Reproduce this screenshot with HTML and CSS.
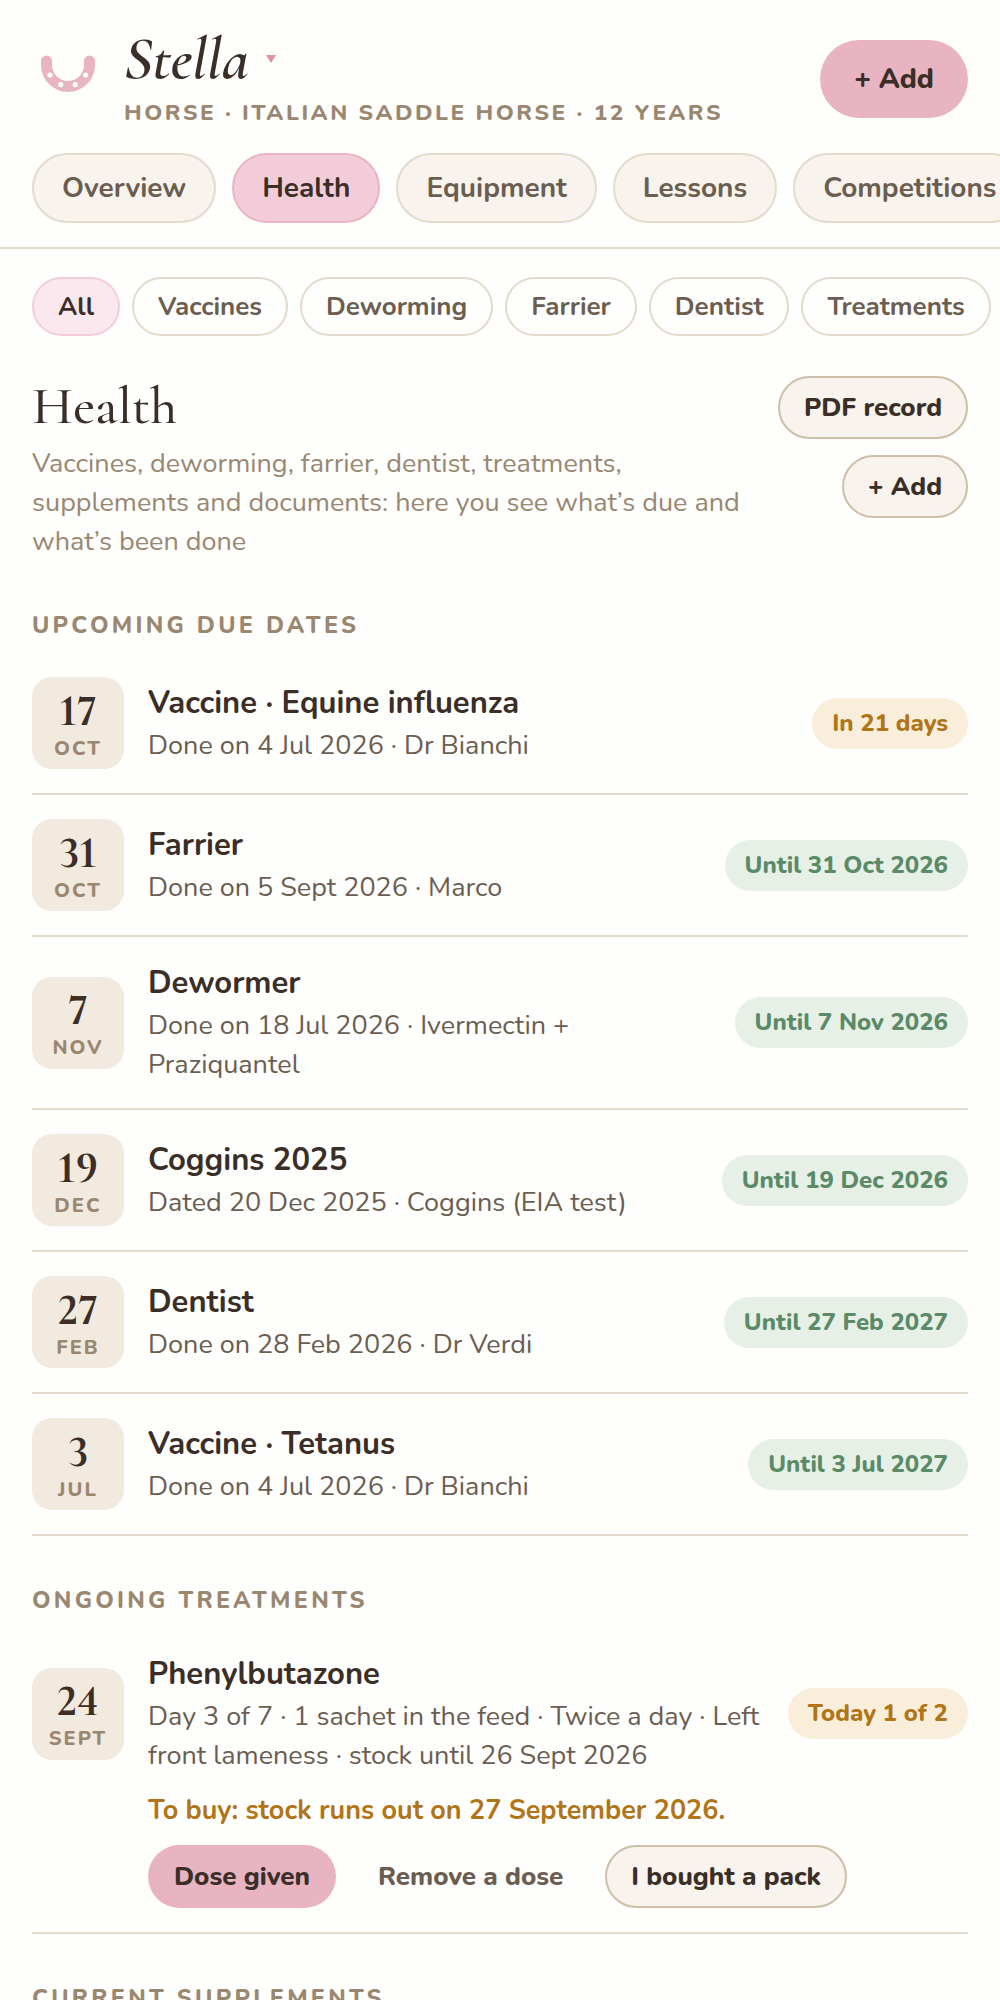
FILE: index.html
```html
<!DOCTYPE html>
<html lang="en">
<head>
  <meta charset="UTF-8">
  <title>Stella · Health</title>
  <meta name="viewport" content="width=device-width, initial-scale=1.0">
  <link rel="stylesheet" href="styles.css">
</head>
<body>
  <header class="top">
    <svg class="logo" viewBox="0 0 56 40" width="56" height="40" aria-hidden="true">
      <path d="M6.5 7V11A21.5 21.5 0 0 0 49.5 11V7" fill="none" stroke="#e8b4c2" stroke-width="11" stroke-linecap="round"/>
      <circle cx="10" cy="21" r="2.6" fill="#fff"/>
      <circle cx="20.7" cy="30.7" r="2.6" fill="#fff"/>
      <circle cx="35.3" cy="30.7" r="2.6" fill="#fff"/>
      <circle cx="45.7" cy="21" r="2.6" fill="#fff"/>
    </svg>
    <div class="who">
      <div class="name">Stella <span class="caret"></span></div>
      <div class="sub">Horse · Italian Saddle Horse · 12 years</div>
    </div>
    <button class="add-main">+ Add</button>
  </header>

  <nav class="tabs">
    <a class="tab">Overview</a>
    <a class="tab active">Health</a>
    <a class="tab">Equipment</a>
    <a class="tab">Lessons</a>
    <a class="tab">Competitions</a>
  </nav>

  <main class="content">
    <div class="chips">
      <a class="chip active">All</a>
      <a class="chip">Vaccines</a>
      <a class="chip">Deworming</a>
      <a class="chip">Farrier</a>
      <a class="chip">Dentist</a>
      <a class="chip">Treatments</a>
    </div>

    <section class="intro">
      <div>
        <h1>Health</h1>
        <p>Vaccines, deworming, farrier, dentist, treatments, supplements and documents: here you see what’s due and what’s been done</p>
      </div>
      <div class="intro-actions">
        <button class="btn">PDF record</button>
        <button class="btn">+ Add</button>
      </div>
    </section>

    <h2>Upcoming due dates</h2>

    <div class="row">
      <div class="row-main">
        <div class="date"><b>17</b><span>Oct</span></div>
        <div class="info">
          <div class="title">Vaccine · Equine influenza</div>
          <div class="desc">Done on 4 Jul 2026 · Dr Bianchi</div>
        </div>
        <span class="badge amber">In 21 days</span>
      </div>
    </div>
    <div class="row">
      <div class="row-main">
        <div class="date"><b>31</b><span>Oct</span></div>
        <div class="info">
          <div class="title">Farrier</div>
          <div class="desc">Done on 5 Sept 2026 · Marco</div>
        </div>
        <span class="badge green">Until 31 Oct 2026</span>
      </div>
    </div>
    <div class="row">
      <div class="row-main">
        <div class="date"><b>7</b><span>Nov</span></div>
        <div class="info">
          <div class="title">Dewormer</div>
          <div class="desc">Done on 18 Jul 2026 · Ivermectin + Praziquantel</div>
        </div>
        <span class="badge green">Until 7 Nov 2026</span>
      </div>
    </div>
    <div class="row">
      <div class="row-main">
        <div class="date"><b>19</b><span>Dec</span></div>
        <div class="info">
          <div class="title">Coggins 2025</div>
          <div class="desc">Dated 20 Dec 2025 · Coggins (EIA test)</div>
        </div>
        <span class="badge green">Until 19 Dec 2026</span>
      </div>
    </div>
    <div class="row">
      <div class="row-main">
        <div class="date"><b>27</b><span>Feb</span></div>
        <div class="info">
          <div class="title">Dentist</div>
          <div class="desc">Done on 28 Feb 2026 · Dr Verdi</div>
        </div>
        <span class="badge green">Until 27 Feb 2027</span>
      </div>
    </div>
    <div class="row">
      <div class="row-main">
        <div class="date"><b>3</b><span>Jul</span></div>
        <div class="info">
          <div class="title">Vaccine · Tetanus</div>
          <div class="desc">Done on 4 Jul 2026 · Dr Bianchi</div>
        </div>
        <span class="badge green">Until 3 Jul 2027</span>
      </div>
    </div>

    <h2>Ongoing treatments</h2>

    <div class="row">
      <div class="row-main">
        <div class="date"><b>24</b><span>Sept</span></div>
        <div class="info">
          <div class="title">Phenylbutazone</div>
          <div class="desc">Day 3 of 7 · 1 sachet in the feed · Twice a day · Left front lameness · stock until 26 Sept 2026</div>
        </div>
        <span class="badge amber">Today 1 of 2</span>
      </div>
      <div class="extra">
        <div class="warn">To buy: stock runs out on 27 September 2026.</div>
        <div class="actions">
          <button class="btn-pink">Dose given</button>
          <button class="btn-plain">Remove a dose</button>
          <button class="btn">I bought a pack</button>
        </div>
      </div>
    </div>

    <h2>Current supplements</h2>
  </main>
</body>
</html>
```

FILE: styles.css
```css
:root {
  --dark: #3a2e26;
  --mid: #6b5d50;
  --light: #9a8770;
  --pink: #e8b4c2;
  --pink-soft: #f2cdd9;
  --pink-pale: #fae8ee;
  --cream: #f8f3ec;
  --line: #e4dacb;
  --sans: "Nunito", "Lato", "Noto Sans", sans-serif;
  --serif: "Cormorant Garamond", "Liberation Serif", serif;
}

* {
  box-sizing: border-box;
}

body {
  margin: 0;
  height: 2000px;
  overflow: hidden;
  background: #fefefd;
  color: var(--dark);
  font-family: var(--sans);
}

button {
  font-family: var(--sans);
  white-space: nowrap;
  cursor: pointer;
}

.top {
  display: flex;
  align-items: flex-start;
  height: 153px;
  padding: 30px 32px 0 40px;
}

.logo {
  margin: 24px 28px 0 0;
  flex: none;
}

.who {
  flex: 1;
}

.name {
  font-family: var(--serif);
  font-style: italic;
  font-weight: 600;
  font-size: 61px;
  line-height: 58px;
}

.caret {
  display: inline-block;
  width: 0;
  height: 0;
  margin-left: 3px;
  vertical-align: 15px;
  border-left: 5px solid transparent;
  border-right: 5px solid transparent;
  border-top: 8px solid #dc93a8;
}

.sub {
  margin-top: 11px;
  font-size: 22.67px;
  line-height: 28px;
  font-weight: 800;
  letter-spacing: 0.11em;
  text-transform: uppercase;
  color: var(--light);
}

.add-main {
  width: 148px;
  height: 78px;
  margin-top: 10px;
  border: 0;
  border-radius: 39px;
  background: var(--pink);
  color: var(--dark);
  font-size: 28px;
  font-weight: 800;
}

.tabs {
  display: flex;
  gap: 16px;
  height: 96px;
  padding: 0 0 0 32px;
  overflow: hidden;
  border-bottom: 2px solid var(--line);
}

.tab {
  flex: none;
  height: 70px;
  padding: 0 28px;
  border: 2px solid var(--line);
  border-radius: 35px;
  background: var(--cream);
  color: var(--mid);
  font-size: 28px;
  font-weight: 700;
  line-height: 66px;
}

.tab.active {
  background: var(--pink-soft);
  border-color: var(--pink);
  color: var(--dark);
}

.content {
  padding: 28px 32px 0;
}

.chips {
  display: flex;
  gap: 12px;
}

.chip {
  height: 59px;
  padding: 0 24px;
  border: 2px solid var(--line);
  border-radius: 30px;
  color: var(--mid);
  font-size: 26px;
  font-weight: 700;
  line-height: 55px;
  white-space: nowrap;
}

.chip.active {
  background: var(--pink-pale);
  border-color: var(--pink-soft);
  color: var(--dark);
}

.intro {
  display: flex;
  justify-content: space-between;
  margin-top: 40px;
}

h1 {
  margin: 0 0 8px;
  font-family: var(--serif);
  font-weight: 500;
  font-size: 54px;
  line-height: 60px;
}

.intro p {
  width: 720px;
  margin: 0;
  font-size: 27px;
  line-height: 39px;
  color: var(--light);
}

.intro-actions {
  display: flex;
  flex-direction: column;
  align-items: flex-end;
  gap: 16px;
}

.btn {
  height: 63px;
  padding: 0 24px;
  border: 2px solid #cfbfa9;
  border-radius: 32px;
  background: var(--cream);
  color: var(--dark);
  font-size: 26px;
  font-weight: 800;
}

h2 {
  margin: 50px 0 14px;
  font-size: 23.33px;
  line-height: 28px;
  font-weight: 800;
  letter-spacing: 0.14em;
  text-transform: uppercase;
  color: var(--light);
}

.row {
  padding: 24px 0;
  border-bottom: 2px solid var(--line);
}

.row-main {
  display: flex;
  align-items: center;
  gap: 24px;
}

.date {
  flex: none;
  display: flex;
  flex-direction: column;
  align-items: center;
  justify-content: center;
  width: 92px;
  height: 92px;
  padding-top: 4px;
  border-radius: 20px;
  background: #f2e9df;
}

.date b {
  font-family: var(--serif);
  font-variant-numeric: lining-nums;
  font-weight: 700;
  font-size: 46px;
  line-height: 41px;
}

.date span {
  margin-top: 6px;
  font-size: 20px;
  line-height: 24px;
  font-weight: 800;
  letter-spacing: 0.1em;
  text-transform: uppercase;
  color: var(--light);
}

.info {
  flex: 1;
  min-width: 0;
}

.title {
  font-size: 31px;
  line-height: 45px;
  font-weight: 700;
}

.desc {
  font-size: 27px;
  line-height: 39px;
  color: var(--mid);
}

.badge {
  flex: none;
  padding: 0 20px;
  height: 51px;
  border-radius: 26px;
  font-size: 24px;
  line-height: 51px;
  font-weight: 800;
}

.amber {
  background: #f9eed9;
  color: #b07518;
}

.green {
  background: #e6f0e7;
  color: #5a8a66;
}

.extra {
  margin-left: 116px;
}

.warn {
  margin-top: 19px;
  font-size: 27px;
  line-height: 34px;
  font-weight: 700;
  color: #b07518;
}

.actions {
  display: flex;
  align-items: center;
  gap: 16px;
  margin-top: 17px;
}

.btn-pink {
  height: 63px;
  padding: 0 26px;
  border: 0;
  border-radius: 32px;
  background: var(--pink);
  color: var(--dark);
  font-size: 26px;
  font-weight: 800;
}

.btn-plain {
  padding: 0 26px;
  border: 0;
  background: none;
  color: var(--mid);
  font-size: 26px;
  font-weight: 800;
}
```
